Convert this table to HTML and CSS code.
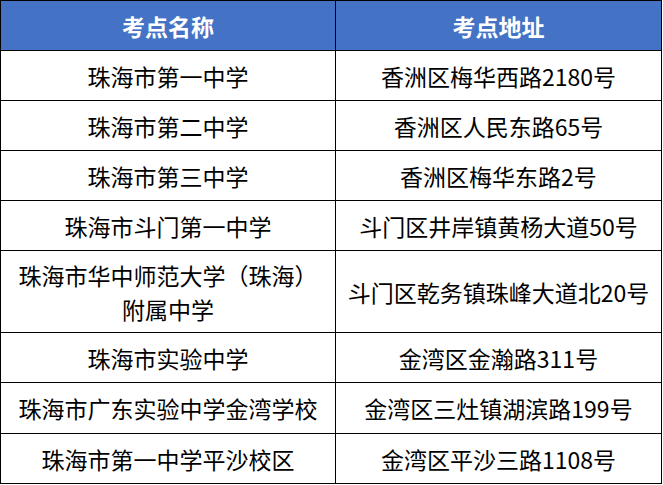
FILE: index.html
```html
<!DOCTYPE html>
<html lang="zh-CN">
<head>
<meta charset="utf-8">
<title>考点名称与地址</title>
<link rel="stylesheet" href="styles.css">
</head>
<body>
<table class="exam-table">
  <thead>
    <tr class="head-row">
      <th class="col-name">考点名称</th>
      <th class="col-addr">考点地址</th>
    </tr>
  </thead>
  <tbody>
    <tr class="row"><td class="col-name">珠海市第一中学</td><td class="col-addr">香洲区梅华西路2180号</td></tr>
    <tr class="row"><td class="col-name">珠海市第二中学</td><td class="col-addr">香洲区人民东路65号</td></tr>
    <tr class="row"><td class="col-name">珠海市第三中学</td><td class="col-addr">香洲区梅华东路2号</td></tr>
    <tr class="row"><td class="col-name">珠海市斗门第一中学</td><td class="col-addr">斗门区井岸镇黄杨大道50号</td></tr>
    <tr class="row row-tall"><td class="col-name"><span class="line">珠海市华中师范大学（珠海）</span><span class="line">附属中学</span></td><td class="col-addr">斗门区乾务镇珠峰大道北20号</td></tr>
    <tr class="row"><td class="col-name">珠海市实验中学</td><td class="col-addr">金湾区金瀚路311号</td></tr>
    <tr class="row row-51"><td class="col-name">珠海市广东实验中学金湾学校</td><td class="col-addr">金湾区三灶镇湖滨路199号</td></tr>
    <tr class="row"><td class="col-name">珠海市第一中学平沙校区</td><td class="col-addr">金湾区平沙三路1108号</td></tr>
  </tbody>
</table>
</body>
</html>
```
FILE: styles.css
```css
html, body {
  margin: 0;
  padding: 0;
  background: #ffffff;
}

.exam-table {
  border-collapse: separate;
  border-spacing: 0;
  width: 662px;
  table-layout: fixed;
  border-top: 1px solid #000;
  border-left: 1px solid #000;
  font-family: "Noto Sans CJK SC", "Microsoft YaHei", sans-serif;
  font-size: 23px;
  color: #000;
}

.exam-table th,
.exam-table td {
  box-sizing: border-box;
  height: 50px;
  padding: 0;
  text-align: center;
  vertical-align: middle;
  border-right: 1px solid #000;
  border-bottom: 1px solid #000;
  line-height: 30px;
}

.col-name {
  width: 335px;
}

.col-addr {
  width: 326px;
}

.head-row th {
  background: #4472c4;
  color: #ffffff;
  font-weight: 700;
}

.row td {
  font-weight: 400;
}

.line {
  display: block;
  line-height: 34px;
}

.row-tall td {
  height: 82px;
}

.row-51 td {
  height: 51px;
}
```
